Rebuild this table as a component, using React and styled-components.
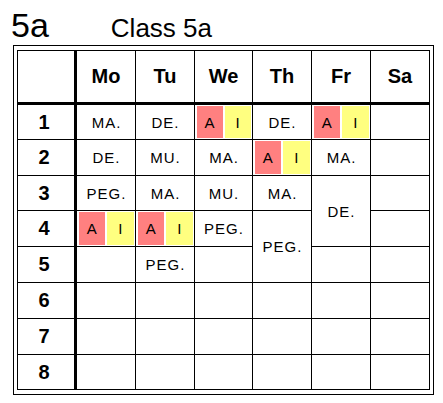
import styled, { createGlobalStyle } from "styled-components";

const GlobalStyle = createGlobalStyle`
  body {
    margin: 0;
    background: #ffffff;
    font-family: "Liberation Sans", Arial, sans-serif;
    color: #000000;
  }
`;

const days = ["Mo", "Tu", "We", "Th", "Fr", "Sa"];

// one entry per grid cell in source order; covered cells of a span are left out
const AI = { ai: true };
const periods = [
  ["MA.", "DE.", AI, "DE.", AI, ""],
  ["DE.", "MU.", "MA.", AI, "MA.", ""],
  ["PEG.", "MA.", "MU.", "MA.", { text: "DE.", span: 2 }, ""],
  [AI, AI, "PEG.", { text: "PEG.", span: 2 }, ""],
  ["", "PEG.", "", "", ""],
  ["", "", "", "", "", ""],
  ["", "", "", "", "", ""],
  ["", "", "", "", "", ""],
];

// which day column each entry sits in (to know the last column)
const columnsOf = [
  [0, 1, 2, 3, 4, 5],
  [0, 1, 2, 3, 4, 5],
  [0, 1, 2, 3, 4, 5],
  [0, 1, 2, 3, 5],
  [0, 1, 2, 4, 5],
  [0, 1, 2, 3, 4, 5],
  [0, 1, 2, 3, 4, 5],
  [0, 1, 2, 3, 4, 5],
];

export default function App() {
  const lastRow = periods.length - 1;

  return (
    <>
      <GlobalStyle />
      <Title>
        <ClassCode>5a</ClassCode>
        <ClassName>Class 5a</ClassName>
      </Title>
      <Frame>
        <Grid>
          <LabelCell $header />
          {days.map((d, i) => (
            <HeadCell key={d} $lastCol={i === days.length - 1}>
              {d}
            </HeadCell>
          ))}

          {periods.map((row, r) => (
            <Row
              key={r}
              number={r + 1}
              row={row}
              cols={columnsOf[r]}
              isLast={r === lastRow}
            />
          ))}
        </Grid>
      </Frame>
    </>
  );
}

function Row({ number, row, cols, isLast }) {
  return (
    <>
      <LabelCell $lastRow={isLast}>{number}</LabelCell>
      {row.map((item, i) => {
        const lastCol = cols[i] === days.length - 1;
        const span = item && item.span ? item.span : 1;
        if (item && item.ai) {
          return (
            <Cell key={i} $lastCol={lastCol} $lastRow={isLast}>
              <Split>
                <Half $kind="a">A</Half>
                <Half $kind="i">I</Half>
              </Split>
            </Cell>
          );
        }
        return (
          <Cell key={i} $span={span} $lastCol={lastCol} $lastRow={isLast}>
            {typeof item === "string" ? item : item.text}
          </Cell>
        );
      })}
    </>
  );
}

const Title = styled.div`
  box-sizing: border-box;
  height: 45px;
  padding: 8px 0 0 11px;
  display: flex;
  align-items: baseline;
  line-height: 1;
`;

const ClassCode = styled.span`
  font-size: 34px;
`;

const ClassName = styled.span`
  font-size: 26px;
  margin-left: 62px;
`;

const Frame = styled.div`
  box-sizing: border-box;
  margin-left: 13px;
  width: 421px;
  height: 350px;
  border: 1px solid #000;
  padding: 4px 3px;
`;

const Grid = styled.div`
  box-sizing: border-box;
  width: 413px;
  height: 340px;
  border: 1px solid #000;
  display: grid;
  grid-template-columns: 59px 59px 59px 58px 59px 59px 58px;
  grid-template-rows: 54px 35px 36px 35px 36px 36px 36px 36px 34px;
`;

const BaseCell = styled.div`
  box-sizing: border-box;
  display: flex;
  align-items: center;
  justify-content: center;
  border-right: ${(p) => (p.$lastCol ? "none" : "1px solid #000")};
  border-bottom: ${(p) => (p.$lastRow ? "none" : "1px solid #000")};
`;

const LabelCell = styled(BaseCell)`
  border-right: 3px solid #000;
  border-bottom: ${(p) =>
    p.$header ? "3px solid #000" : p.$lastRow ? "none" : "1px solid #000"};
  font-size: 20px;
  font-weight: 700;
  padding-right: 4px;
`;

const HeadCell = styled(BaseCell)`
  border-bottom: 3px solid #000;
  font-size: 20px;
  font-weight: 700;
`;

const Cell = styled(BaseCell)`
  grid-row: span ${(p) => p.$span || 1};
  font-size: 15px;
  letter-spacing: 1px;
  padding-left: 1px;
`;

const Split = styled.div`
  box-sizing: border-box;
  width: 100%;
  height: 100%;
  padding: 1px;
  display: grid;
  grid-template-columns: 1fr 1fr;
  gap: 2px;
  margin-left: -1px;
`;

const Half = styled.div`
  display: flex;
  align-items: center;
  justify-content: center;
  letter-spacing: 0;
  background: ${(p) => (p.$kind === "a" ? "#ff8080" : "#ffff80")};
`;
